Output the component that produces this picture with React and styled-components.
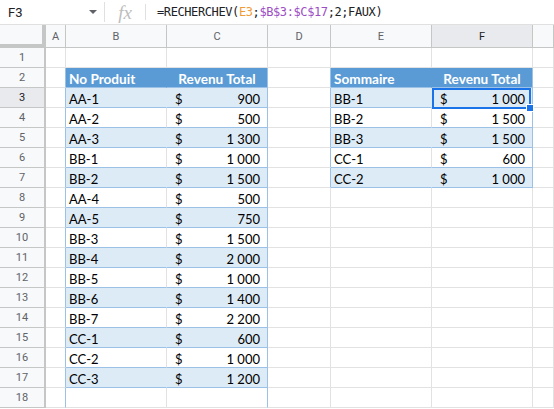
import React from 'react';
import styled, { createGlobalStyle } from 'styled-components';

const GRID = '#e2e2e2';
const HEAD_LINE = '#c4c7c5';
const TBL_HEAD = '#5b9bd5';
const BAND = '#ddebf7';
const TBL_LINE = '#9bc2e6';
const SEL = '#1a73e8';

const GlobalStyle = createGlobalStyle`
  html, body { margin: 0; padding: 0; background: #fff; }
  body { overflow: hidden; }
  *, *::before, *::after { box-sizing: border-box; }
`;

const Page = styled.div`
  width: 554px;
  height: 409px;
  overflow: hidden;
  background: #fff;
  font-family: Roboto, "Liberation Sans", Arial, sans-serif;
`;

const FormulaBar = styled.div`
  display: flex;
  align-items: center;
  height: 25px;
  border-bottom: 1px solid #e0e0e0;
`;

const NameBox = styled.div`
  width: 104px;
  height: 100%;
  display: flex;
  align-items: center;
  justify-content: space-between;
  padding: 0 7px 0 8px;
  font-size: 13px;
  color: #202124;
`;

const Caret = styled.span`
  width: 0;
  height: 0;
  border-left: 4px solid transparent;
  border-right: 4px solid transparent;
  border-top: 4px solid #5f6368;
`;

const Divider = styled.span`
  width: 1px;
  height: ${p => p.$h}px;
  background: #e0e0e0;
`;

const FxBox = styled.div`
  width: 40px;
  display: flex;
  justify-content: center;
  font-family: "Liberation Serif", "DejaVu Serif", serif;
  font-style: italic;
  font-size: 19px;
  color: #bdbdbd;
  line-height: 1;
`;

const Formula = styled.div`
  padding-left: 11px;
  font-family: "DejaVu Sans Mono", "Liberation Mono", monospace;
  font-size: 12px;
  letter-spacing: -0.4px;
  color: #202124;
  white-space: nowrap;
`;

const Ref = styled.span`
  color: ${p => p.$c};
`;

const Sheet = styled.div`
  display: grid;
  grid-template-columns: 46px 20px 101px 101px 63px 101px 101px 1fr;
  grid-template-rows: 23px;
  grid-auto-rows: 20px;
`;

const Corner = styled.div`
  background: #f8f9fa;
  border-right: 4px solid ${HEAD_LINE};
  border-bottom: 4px solid ${HEAD_LINE};
`;

const ColHead = styled.div`
  display: flex;
  align-items: center;
  justify-content: center;
  background: ${p => (p.$active ? '#e8eaed' : '#f8f9fa')};
  border-right: 1px solid ${HEAD_LINE};
  border-bottom: 1px solid ${HEAD_LINE};
  font-size: 11px;
  color: ${p => (p.$active ? '#202124' : '#5f6368')};
`;

const RowHead = styled.div`
  display: flex;
  align-items: center;
  justify-content: center;
  background: ${p => (p.$active ? '#e8eaed' : '#f8f9fa')};
  border-right: 2px solid ${HEAD_LINE};
  border-bottom: 1px solid ${HEAD_LINE};
  font-size: 11px;
  color: ${p => (p.$active ? '#202124' : '#5f6368')};
`;

const Cell = styled.div`
  position: relative;
  display: flex;
  align-items: flex-end;
  justify-content: ${p => p.$justify || 'flex-start'};
  padding: ${p => p.$pad || '0 3px'};
  background: ${p => p.$bg || '#fff'};
  border-right: 1px solid ${p => p.$rb || GRID};
  border-bottom: 1px solid ${p => p.$bb || GRID};
  font-family: Lato, "Open Sans", sans-serif;
  font-size: ${p => (p.$bold ? '13.6px' : '13px')};
  font-weight: ${p => (p.$bold ? 700 : 400)};
  color: ${p => (p.$bold ? '#fff' : '#000')};
  white-space: nowrap;
`;

const Selection = styled.div`
  position: absolute;
  z-index: 2;
  left: 0;
  top: 0;
  width: 99px;
  height: 21px;
  border: 2px solid ${SEL};
  pointer-events: none;
`;

const Handle = styled.span`
  position: absolute;
  right: -5px;
  bottom: -5px;
  width: 8px;
  height: 8px;
  background: ${SEL};
  border: 1px solid #fff;
`;

const left = {
  3: ['AA-1', '900'],
  4: ['AA-2', '500'],
  5: ['AA-3', '1 300'],
  6: ['BB-1', '1 000'],
  7: ['BB-2', '1 500'],
  8: ['AA-4', '500'],
  9: ['AA-5', '750'],
  10: ['BB-3', '1 500'],
  11: ['BB-4', '2 000'],
  12: ['BB-5', '1 000'],
  13: ['BB-6', '1 400'],
  14: ['BB-7', '2 200'],
  15: ['CC-1', '600'],
  16: ['CC-2', '1 000'],
  17: ['CC-3', '1 200'],
};

const right = {
  3: ['BB-1', '1 000'],
  4: ['BB-2', '1 500'],
  5: ['BB-3', '1 500'],
  6: ['CC-1', '600'],
  7: ['CC-2', '1 000'],
};

const cols = ['A', 'B', 'C', 'D', 'E', 'F', 'G'];
const rows = Array.from({ length: 18 }, (_, i) => i + 1);

function tableRow(r, from, to) {
  const inside = r >= from && r <= to;
  const head = r === from;
  const band = inside && !head && (r - from) % 2 === 1;
  return {
    inside,
    head,
    bg: head ? TBL_HEAD : band ? BAND : '#fff',
    innerRb: head ? TBL_HEAD : band ? BAND : GRID,
    bb: inside ? TBL_LINE : GRID,
  };
}

function Money({ value, children, ...rest }) {
  return (
    <Cell $justify="space-between" $pad="0 7px 0 8px" {...rest}>
      <span>$</span>
      <span>{value.replace(' ', '\u00a0')}</span>
      {children}
    </Cell>
  );
}

function SelectedCellFrame() {
  return (
    <Selection>
      <Handle />
    </Selection>
  );
}

function SheetRow({ r }) {
  const L = tableRow(r, 2, 17);
  const R = tableRow(r, 2, 7);
  const leftEdge = r >= 2 && r <= 18 ? TBL_LINE : GRID;
  const rightEdge = R.inside ? TBL_LINE : GRID;
  const ld = left[r];
  const rd = right[r];
  const selected = r === 3;

  return (
    <>
      <RowHead $active={selected}>{r}</RowHead>
      <Cell $rb={leftEdge} />
      {L.head ? (
        <Cell $bg={L.bg} $rb={L.innerRb} $bb={L.bb} $bold>No Produit</Cell>
      ) : (
        <Cell $bg={L.bg} $rb={L.innerRb} $bb={L.bb}>{ld ? ld[0] : ''}</Cell>
      )}
      {L.head ? (
        <Cell $bg={L.bg} $rb={leftEdge} $bb={L.bb} $bold $justify="center">Revenu Total</Cell>
      ) : ld ? (
        <Money value={ld[1]} $bg={L.bg} $rb={leftEdge} $bb={L.bb} />
      ) : (
        <Cell $bg={L.bg} $rb={leftEdge} $bb={L.bb} />
      )}
      <Cell $rb={rightEdge} />
      {R.head ? (
        <Cell $bg={R.bg} $rb={R.innerRb} $bb={R.bb} $bold>Sommaire</Cell>
      ) : (
        <Cell $bg={R.bg} $rb={R.innerRb} $bb={R.bb}>{rd ? rd[0] : ''}</Cell>
      )}
      {R.head ? (
        <Cell $bg={R.bg} $rb={rightEdge} $bb={R.bb} $bold $justify="center">Revenu Total</Cell>
      ) : rd ? (
        <Money value={rd[1]} $bg={R.bg} $rb={rightEdge} $bb={R.bb}>
          {selected && <SelectedCellFrame />}
        </Money>
      ) : (
        <Cell $bg={R.bg} $rb={rightEdge} $bb={R.bb} />
      )}
      <Cell />
    </>
  );
}

export default function App() {
  return (
    <Page>
      <GlobalStyle />
      <FormulaBar>
        <NameBox>
          <span>F3</span>
          <Caret />
        </NameBox>
        <Divider $h={20} />
        <FxBox>fx</FxBox>
        <Divider $h={16} />
        <Formula>
          =RECHERCHEV(<Ref $c="#f09b36">E3</Ref>;<Ref $c="#9c4dc4">$B$3:$C$17</Ref>;2;FAUX)
        </Formula>
      </FormulaBar>
      <Sheet>
        <Corner />
        {cols.map(c => (
          <ColHead key={c} $active={c === 'F'}>{c === 'G' ? '' : c}</ColHead>
        ))}
        {rows.map(r => (
          <SheetRow key={r} r={r} />
        ))}
      </Sheet>
    </Page>
  );
}
